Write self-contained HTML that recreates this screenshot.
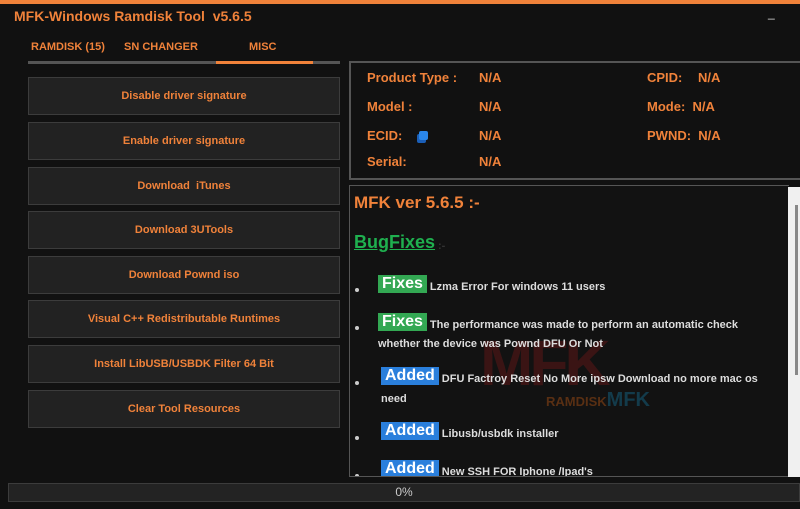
<!DOCTYPE html>
<html><head><meta charset="utf-8"><style>
*{margin:0;padding:0;box-sizing:border-box}
body{width:800px;height:509px;background:#111;overflow:hidden;position:relative;font-family:"Liberation Sans",sans-serif;color:#f0823a;font-weight:bold}
.a{position:absolute}
.btn{position:absolute;left:28px;width:312px;height:38px;background:#222;border:1px solid #3c3c3c;color:#f0823a;font-size:11px;display:flex;align-items:center;justify-content:center}
.lbl{position:absolute;font-size:13px}
.log{position:absolute;left:349px;top:185px;width:440px;height:292px;background:#121212;border:1px solid #555;border-right:none;overflow:hidden;color:#ddd;font-size:11px}
.tag{display:inline-block;color:#fff;font-size:16px;padding:0 4px;line-height:18px;margin-right:3px;vertical-align:2px}
.g{background:#33a853}.b{background:#2a7fdc}
.li{position:absolute;left:28px}
.dot{position:absolute;left:5px;width:4px;height:4px;border-radius:50%;background:#ccc}
</style></head><body>
<div class="a" style="left:0;top:0;width:800px;height:4px;background:#f0823a"></div>
<div class="a" style="left:14px;top:8px;font-size:14px">MFK-Windows Ramdisk Tool&nbsp; v5.6.5</div>
<div class="a" style="left:768px;top:6px;color:#ddd;font-size:12px;font-weight:normal">_</div>
<div class="a" style="left:31px;top:41px;font-size:11px">RAMDISK (15)</div>
<div class="a" style="left:124px;top:41px;font-size:11px">SN CHANGER</div>
<div class="a" style="left:249px;top:41px;font-size:11px">MISC</div>
<div class="a" style="left:28px;top:61px;width:312px;height:3px;background:#555"></div>
<div class="a" style="left:216px;top:61px;width:97px;height:3px;background:#f0823a"></div>
<div class="btn" style="top:77px">Disable driver signature</div>
<div class="btn" style="top:122px">Enable driver signature</div>
<div class="btn" style="top:167px">Download&nbsp; iTunes</div>
<div class="btn" style="top:211px">Download 3UTools</div>
<div class="btn" style="top:256px">Download Pownd iso</div>
<div class="btn" style="top:300px">Visual C++ Redistributable Runtimes</div>
<div class="btn" style="top:345px">Install LibUSB/USBDK Filter 64 Bit</div>
<div class="btn" style="top:390px">Clear Tool Resources</div>
<div class="a" style="left:349px;top:61px;width:460px;height:119px;border:2px solid #555;background:#111"></div>
<div class="lbl" style="left:367px;top:70px">Product Type :</div>
<div class="lbl" style="left:479px;top:70px">N/A</div>
<div class="lbl" style="left:367px;top:99px">Model :</div>
<div class="lbl" style="left:479px;top:99px">N/A</div>
<div class="lbl" style="left:367px;top:128px">ECID:</div>
<div class="a" style="left:417px;top:134px;width:9px;height:9px;background:#1b5fb8;border-radius:2px"></div>
<div class="a" style="left:419px;top:131px;width:9px;height:9px;background:#2a86e8;border-radius:2px"></div>
<div class="lbl" style="left:479px;top:128px">N/A</div>
<div class="lbl" style="left:367px;top:154px">Serial:</div>
<div class="lbl" style="left:479px;top:154px">N/A</div>
<div class="lbl" style="left:647px;top:70px">CPID:</div>
<div class="lbl" style="left:698px;top:70px">N/A</div>
<div class="lbl" style="left:647px;top:99px">Mode:&nbsp; N/A</div>
<div class="lbl" style="left:647px;top:128px">PWND:&nbsp; N/A</div>
<div class="log">
<div class="a" style="left:4px;top:7px;font-size:17px;color:#f0823a">MFK ver 5.6.5 :-</div>
<div class="a" style="left:4px;top:46px;font-size:18px;color:#1fb04f;text-decoration:underline">BugFixes</div>
<div class="a" style="left:88px;top:54px;color:#333">:-</div>
<div class="a" style="left:130px;top:140px;font-size:64px;color:rgba(120,25,25,.4);font-weight:bold;letter-spacing:-4px">MFK</div>
<div class="a" style="left:196px;top:203px;font-size:13px;color:rgba(120,60,20,.7)">RAMDISK<span style="color:rgba(20,70,90,.8);font-size:20px">MFK</span></div>
<div class="dot" style="top:102px"></div><div class="li" style="top:89px"><span class="tag g">Fixes</span>Lzma Error For windows 11 users</div>
<div class="dot" style="top:140px"></div><div class="li" style="top:127px;width:400px;line-height:19px"><span class="tag g">Fixes</span>The performance was made to perform an automatic check whether the device was Pownd DFU Or Not</div>
<div class="dot" style="top:195px"></div><div class="li" style="top:181px;left:31px;width:400px;line-height:20px"><span class="tag b">Added</span>DFU Factroy Reset No More ipsw Download no more mac os need</div>
<div class="dot" style="top:250px"></div><div class="li" style="top:236px;left:31px"><span class="tag b">Added</span>Libusb/usbdk installer</div>
<div class="dot" style="top:288px"></div><div class="li" style="top:274px;left:31px"><span class="tag b">Added</span>New SSH FOR Iphone /Ipad's</div>
</div>
<div class="a" style="left:788px;top:187px;width:12px;height:290px;background:#f0f0f0"></div>
<div class="a" style="left:795px;top:205px;width:3px;height:170px;background:#888"></div>
<div class="a" style="left:8px;top:483px;width:792px;height:19px;background:#232323;border:1px solid #3c3c3c;color:#ccc;font-size:12px;font-weight:normal;text-align:center;line-height:17px">0%</div>
</body></html>
